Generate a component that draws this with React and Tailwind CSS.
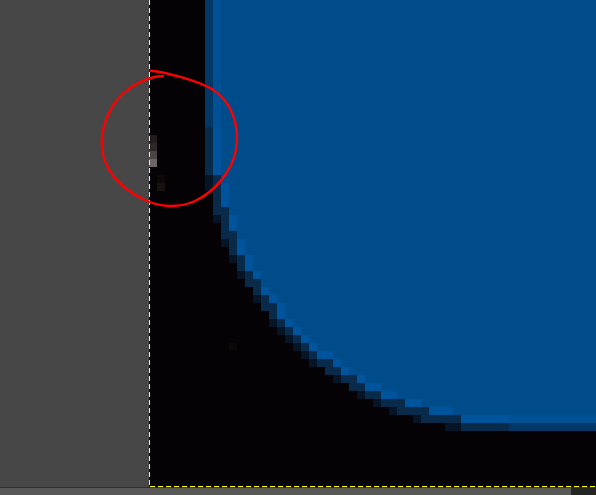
import React from "react";

const FILL = "#004b8a";
const BRIGHT = "#00549c";
const FLAT_BRIGHT = "#005096";
const DARK = "#0a2a4a";
const DARKER = "#061526";
const EDGE_FLAT = "#033866";

function signedDist(px, py) {
  const L = 209, B = 427, R = 300;
  const cx = L + R, cy = B - R;
  if (px < cx && py > cy) return { d: R - Math.hypot(px - cx, py - cy), curve: true };
  if (px < cx) return { d: px - L, curve: false };
  if (py > cy) return { d: B - py, curve: false };
  return { d: 1000, curve: false };
}

function colorFor(px, py) {
  const { d, curve } = signedDist(px, py);
  if (d >= 10) return FILL;
  if (d >= 4) return curve ? BRIGHT : FLAT_BRIGHT;
  if (d >= -4) return curve ? DARK : EDGE_FLAT;
  if (curve && d >= -7) return DARKER;
  return null;
}

function buildRuns() {
  const runs = [];
  const W = 447;
  for (let j = 0; -1 + 8 * j < 486; j++) {
    const y0 = -1 + 8 * j;
    let cur = null;
    for (let i = 0; 8 * i < W; i++) {
      const x0 = 8 * i;
      const c = colorFor(149 + x0 + 4, y0 + 4);
      if (cur && cur.c === c) {
        cur.w += 8;
      } else {
        if (cur && cur.c) runs.push(cur);
        cur = { x: x0, y: y0, w: 8, c };
      }
    }
    if (cur && cur.c) runs.push(cur);
  }
  return runs;
}

const RUNS = buildRuns();

function CanvasArt() {
  return (
    <svg width="447" height="487" viewBox="0 0 447 487" className="block" shapeRendering="crispEdges">
      {RUNS.map((r, k) => (
        <rect key={k} x={r.x} y={r.y} width={r.w} height={Math.min(8, 486 - r.y)} fill={r.c} />
      ))}
      <rect x="0" y="135" width="8" height="8" fill="#211b1b" />
      <rect x="0" y="143" width="8" height="8" fill="#2e2727" />
      <rect x="0" y="151" width="8" height="8" fill="#4a4444" />
      <rect x="0" y="159" width="8" height="8" fill="#6c6664" />
      <rect x="8" y="175" width="8" height="8" fill="#0d0909" />
      <rect x="8" y="183" width="8" height="8" fill="#181212" />
      <rect x="80" y="343" width="8" height="8" fill="#0a0707" />
      <line x1="0.5" y1="0" x2="0.5" y2="486" stroke="#ffff00" strokeWidth="1" strokeDasharray="5 3" />
      <line x1="1" y1="486.5" x2="447" y2="486.5" stroke="#ffff00" strokeWidth="1" strokeDasharray="5 3" />
    </svg>
  );
}

export default function App() {
  return (
    <div className="relative w-[596px] h-[495px] overflow-hidden bg-[#474747] flex flex-col">
      <div className="flex h-[487px]">
        <div className="w-[149px] bg-[#474747]" />
        <div className="flex-1 bg-[#040204]">
          <CanvasArt />
        </div>
      </div>
      <div className="h-px bg-[#2f2f2f]" />
      <div className="flex flex-1">
        <div className="flex-1 bg-[#585858]" />
        <div className="w-[25px] bg-[#242424]" />
      </div>
      <svg
        className="absolute left-0 top-0 pointer-events-none"
        width="596"
        height="495"
        viewBox="0 0 596 495"
      >
        <path
          d="M150.7,70.7 C165,72 195,80 212,89 C232,102 240,125 236,150 C232,172 214,192 195,201 C180,208 160,208 143,199 C120,188 104,170 102,148 C100,125 112,100 130,88 C142,80 152,76 163,76"
          fill="none"
          stroke="#ff0000"
          strokeWidth="2.4"
          strokeLinecap="round"
          strokeLinejoin="round"
        />
      </svg>
    </div>
  );
}
